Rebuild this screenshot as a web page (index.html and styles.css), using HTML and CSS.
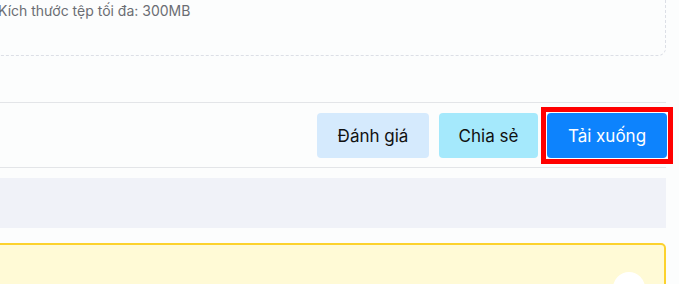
FILE: index.html
```html
<!DOCTYPE html>
<html lang="vi">
<head>
<meta charset="utf-8">
<link rel="stylesheet" href="styles.css">
</head>
<body>
<div class="page">
  <div class="upload">
    <p class="hint">Kích thước tệp tối đa: 300MB</p>
  </div>
  <div class="actions">
    <button class="btn btn-rate">Đánh giá</button>
    <button class="btn btn-share">Chia sẻ</button>
    <span class="highlight"><button class="btn btn-download">Tải xuống</button></span>
  </div>
  <div class="band"></div>
  <div class="notice">
    <span class="notice-dot"></span>
  </div>
</div>
</body>
</html>
```

FILE: styles.css
```css
* { box-sizing: border-box; }
html, body {
  margin: 0;
  padding: 0;
  background: #fcfdfd;
  overflow: hidden;
  height: 284px;
}
body {
  font-family: Inter, "Noto Sans", sans-serif;
}
.page {
  margin-left: -20px;
  width: 686px;
}
.upload {
  margin-top: -40px;
  height: 96px;
  border: 1px dashed #dcdfe6;
  border-radius: 8px;
  padding: 41px 0 0 17px;
}
.hint {
  margin: 0;
  font-size: 14px;
  line-height: 18px;
  color: #6b6d73;
}
.actions {
  margin-top: 46px;
  border-top: 1px solid #e3e5e8;
  border-bottom: 1px solid #e3e5e8;
  display: flex;
  justify-content: flex-end;
  align-items: center;
  gap: 10px;
  padding: 10px 0 9px;
}
.btn {
  height: 45px;
  border: none;
  border-radius: 4px;
  font-family: inherit;
  font-size: 17px;
  color: #111;
  padding: 0;
  white-space: nowrap;
}
.btn-rate { background: #d5eafd; width: 112px; }
.btn-share { background: #a5e9fc; width: 99px; }
.highlight {
  display: flex;
  border: 5px solid #ff0000;
  padding: 1px;
  margin: -6px -7px -6px -7px;
}
.btn-download {
  background: #0d83fd;
  color: #fff;
  width: 120px;
}
.band {
  margin-top: 10px;
  height: 50px;
  background: #f0f2f8;
}
.notice {
  position: relative;
  margin-top: 15px;
  height: 80px;
  border: 2px solid #fcd22e;
  border-radius: 5px;
  background: #fffad6;
}
.notice-dot {
  position: absolute;
  left: 631px;
  top: 27px;
  width: 32px;
  height: 32px;
  border-radius: 50%;
  background: #fff;
}
```
